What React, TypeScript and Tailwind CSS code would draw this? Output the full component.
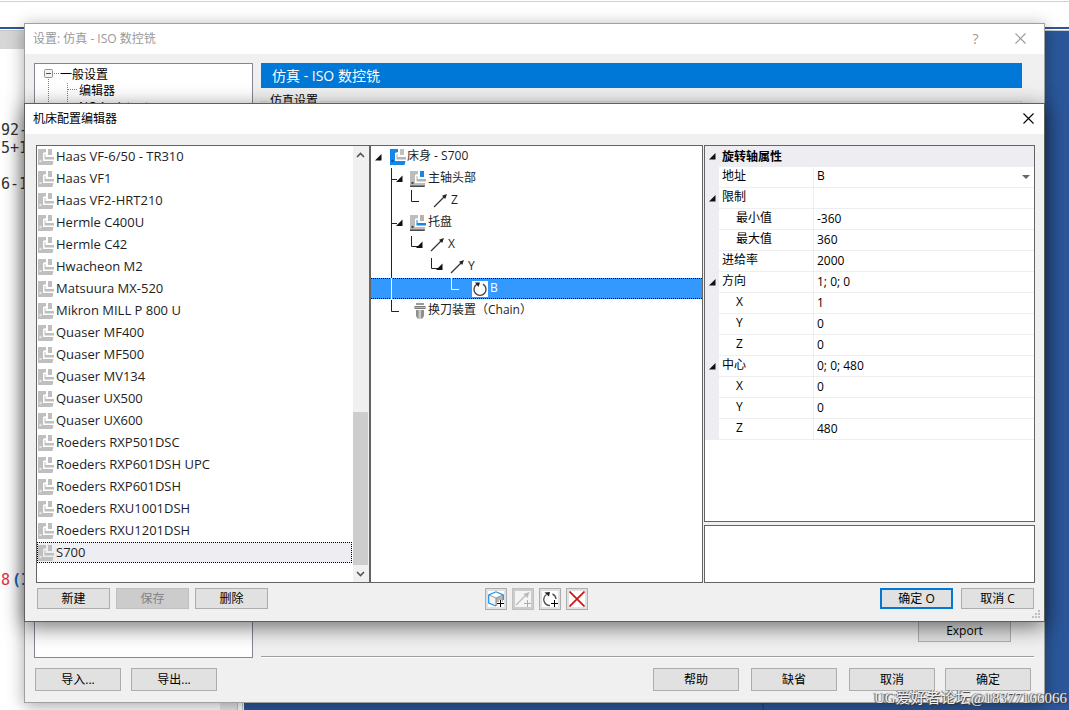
import { useState } from "react";
import type { ReactNode } from "react";
import clsx from "clsx";

const machines = [
  "Haas VF-6/50 - TR310",
  "Haas VF1",
  "Haas VF2-HRT210",
  "Hermle C400U",
  "Hermle C42",
  "Hwacheon M2",
  "Matsuura MX-520",
  "Mikron MILL P 800 U",
  "Quaser MF400",
  "Quaser MF500",
  "Quaser MV134",
  "Quaser UX500",
  "Quaser UX600",
  "Roeders RXP501DSC",
  "Roeders RXP601DSH UPC",
  "Roeders RXP601DSH",
  "Roeders RXU1001DSH",
  "Roeders RXU1201DSH",
  "S700",
];

type Guide = "blank" | "line" | "branch" | "corner" | "cornerOpen";

interface TreeNode {
  label: string;
  guides: Guide[];
  icon: ReactNode;
}

interface Property {
  id: string;
  name: string;
  value: string;
  indent?: boolean;
  group?: boolean;
  options?: boolean;
}

const properties: Property[] = [
  { id: "address", name: "地址", value: "B", options: true },
  { id: "limits", name: "限制", value: "", group: true },
  { id: "min", name: "最小值", value: "-360", indent: true },
  { id: "max", name: "最大值", value: "360", indent: true },
  { id: "feed", name: "进给率", value: "2000" },
  { id: "direction", name: "方向", value: "1; 0; 0", group: true },
  { id: "dir-x", name: "X", value: "1", indent: true },
  { id: "dir-y", name: "Y", value: "0", indent: true },
  { id: "dir-z", name: "Z", value: "0", indent: true },
  { id: "center", name: "中心", value: "0; 0; 480", group: true },
  { id: "center-x", name: "X", value: "0", indent: true },
  { id: "center-y", name: "Y", value: "0", indent: true },
  { id: "center-z", name: "Z", value: "480", indent: true },
];

/* ICONS */

interface MachineIconProps {
  body: string;
  head: string;
  table: string;
  base?: string;
  dot?: string;
}

const MachineIcon = ({ body, head, table, base, dot = "#e4e4e4" }: MachineIconProps) => (
  <svg width="16" height="16" viewBox="0 0 16 16" className="shrink-0">
    <path d="M0 0H8V3L5 4V12H15.500L14.500 16H0Z" fill={body} />
    {base && <path d="M0 14.500H15L14.500 16H0Z" fill={base} />}
    <rect x="10" y="0" width="4" height="6" fill={head} />
    <path d="M6.500 5H7.500V8H16V10.500H6.500Z" fill={table} />
    <circle cx="2.500" cy="12" r="1.300" fill={dot} />
  </svg>
);

const AxisIcon = () => (
  <svg width="16" height="16" viewBox="0 0 16 16" className="shrink-0">
    <path d="M1 14L12 3" stroke="#333" strokeWidth="1.200" />
    <path d="M14 1L9 2.800L12.200 6Z" fill="#222" />
  </svg>
);

const RotaryIcon = () => (
  <svg width="16" height="16" viewBox="0 0 16 16" className="shrink-0 bg-white">
    <path d="M5 3.200A6 6 0 1 0 11 3.200" fill="none" stroke="#444" strokeWidth="1.400" />
    <path d="M3 1.500H8L6.500 6Z" fill="#222" />
  </svg>
);

const ToolChangerIcon = () => (
  <svg width="12" height="16" viewBox="0 0 12 16" className="shrink-0">
    <rect x="2" y="0" width="8" height="2" fill="#999" />
    <path d="M0.500 3H11.500V6H0.500Z" fill="#777" />
    <path d="M0.500 4H11.500V5H0.500Z" fill="#bbb" />
    <path d="M2 7H10V13L8.500 15.500H3.500L2 13Z" fill="#8f8f8f" />
    <path d="M4.500 7H7V15H4.500Z" fill="#c8c8c8" />
  </svg>
);

const Expander = () => (
  <svg width="7" height="7" viewBox="0 0 7 7">
    <path d="M6.500 0V6.500H0Z" fill="#111" />
  </svg>
);

const CloseIcon = ({ color }: { color: string }) => (
  <svg width="11" height="11" viewBox="0 0 11 11">
    <path d="M0.500 0.500L10.500 10.500M10.500 0.500L0.500 10.500" stroke={color} strokeWidth="1.100" />
  </svg>
);

const PlusMark = ({ color }: { color: string }) => (
  <path d="M9 12.500H16M12.500 9V16" stroke={color} strokeWidth="1" />
);

const AddPartIcon = () => (
  <svg width="16" height="16" viewBox="0 0 16 16" className="bg-white">
    <path d="M1 4L8 7V15L1 12Z" fill="#f4f4f4" />
    <path d="M8 7L15 4V12L8 15Z" fill="#b5b5b5" />
    <path d="M1 4L8 7L15 4" fill="none" stroke="#999" strokeWidth="1" />
    <path d="M8 7V15" stroke="#888" strokeWidth="1" />
    <path d="M8 15L0.700 12V4L8 0.800L15.300 4V9" fill="none" stroke="#1b8fe6" strokeWidth="1.200" />
    <path d="M9 12.500H16M12.500 9V16" stroke="#fff" strokeWidth="3" />
    <PlusMark color="#000" />
  </svg>
);

const AddAxisIcon = () => (
  <svg width="16" height="16" viewBox="0 0 16 16" className="bg-[#f4f4f4]">
    <path d="M1 14L12 3" stroke="#bbb" strokeWidth="1.300" />
    <path d="M14.500 1L8.500 3L12.500 7Z" fill="#bbb" />
    <PlusMark color="#aaa" />
  </svg>
);

const AddRotaryIcon = () => (
  <svg width="16" height="16" viewBox="0 0 16 16" className="bg-white">
    <path d="M4.500 3.500A6 6 0 0 0 8 14.500M10.500 3A6 6 0 0 1 14 8" fill="none" stroke="#555" strokeWidth="1.400" />
    <path d="M2.500 1.500L8 1L7 5.500Z" fill="#222" />
    <PlusMark color="#000" />
  </svg>
);

const DeleteIcon = () => (
  <svg width="16" height="16" viewBox="0 0 16 16" className="bg-white">
    <path d="M0.500 0.500L15.500 15.500M15.500 0.500L0.500 15.500" stroke="#cc1414" strokeWidth="1.700" />
  </svg>
);

const guidePaths: Record<Guide, string> = {
  blank: "",
  line: "M1.500 0V22",
  branch: "M1.500 0V22M1.500 11.500H7",
  corner: "M1.500 0V11.500H9",
  cornerOpen: "M1.500 2V12.500H8",
};

const GuideCell = ({ guide, color }: { guide: Guide; color: string }) => (
  <svg width="20" height="22" viewBox="0 0 20 22" className="shrink-0">
    <path d={guidePaths[guide]} fill="none" stroke={color} strokeWidth="1" />
    {(guide === "branch" || guide === "cornerOpen") && <path d="M12.500 7.500V14H6Z" fill="#111" />}
  </svg>
);

const treeNodes: TreeNode[] = [
  {
    label: "主轴头部",
    guides: ["branch"],
    icon: <MachineIcon body="#bdbdbd" head="#1488e8" table="#b4b4b4" base="#4a4a4a" dot="#555" />,
  },
  { label: "Z", guides: ["line", "corner"], icon: <span className="ml-[3px] flex"><AxisIcon /></span> },
  {
    label: "托盘",
    guides: ["branch"],
    icon: <MachineIcon body="#bdbdbd" head="#b4b4b4" table="#1488e8" base="#4a4a4a" dot="#555" />,
  },
  { label: "X", guides: ["line", "cornerOpen"], icon: <AxisIcon /> },
  { label: "Y", guides: ["line", "blank", "cornerOpen"], icon: <AxisIcon /> },
  {
    label: "B",
    guides: ["line", "blank", "blank", "corner"],
    icon: <span className="ml-[2px] flex"><RotaryIcon /></span>,
  },
  { label: "换刀装置（Chain）", guides: ["corner"], icon: <span className="ml-[4px] flex"><ToolChangerIcon /></span> },
];

/* BUTTONS */

interface PushButtonProps {
  children: ReactNode;
  className?: string;
  disabled?: boolean;
  primary?: boolean;
}

const PushButton = ({ children, className, disabled, primary }: PushButtonProps) => (
  <button
    type="button"
    disabled={disabled}
    className={clsx(
      "flex items-center justify-center text-xs",
      primary ? "border-2 border-[#0078d7] bg-[#e1e1e1]" : "border",
      !primary && (disabled ? "border-[#bfbfbf] bg-[#cccccc] text-[#838383]" : "border-[#adadad] bg-[#e1e1e1]"),
      className
    )}
  >
    {children}
  </button>
);

const ToolButton = ({ label, children, disabled }: { label: string; children: ReactNode; disabled?: boolean }) => (
  <button
    type="button"
    aria-label={label}
    disabled={disabled}
    className={clsx(
      "flex size-[22px] items-center justify-center border",
      disabled ? "border-[#bfbfbf] bg-[#cccccc]" : "border-[#adadad] bg-[#e1e1e1]"
    )}
  >
    {children}
  </button>
);

/* EDITOR BEHIND THE DIALOGS */

const codeLines = ["92-", "5+1", "", "6-1"];

const EditorBackground = () => (
  <div className="flex min-h-screen flex-col bg-white">
    <div className="h-[27px] border-t border-white">
      <div className="h-px bg-[#d2d2d2]" />
    </div>
    <div className="h-[2px] bg-[#2b579a]" />
    <div className="h-[2px] border-b border-[#c8c8c8]" />
    <div className="flex flex-1">
      <div className="flex w-[243px] shrink-0 border-r border-[#c8c8c8]">
        <div className="flex-1">
          <div className="h-[18px] bg-[#d6d6d6]" />
          <div className="pt-[72px] pl-px font-['DejaVu_Sans_Mono',monospace] text-[15px] leading-[18px] text-[#333]">
            {codeLines.map((line, i) => (
              <div key={i} className="h-[18px]">{line}</div>
            ))}
            <div className="flex gap-[2px] pt-[378px]">
              <span className="text-[#dd3344]">8</span>
              <span className="font-bold text-[#1464c0]">(I</span>
            </div>
          </div>
        </div>
        <div className="mr-[4px] w-[18px] border-r border-[#c8c8c8] bg-[#e8e8e8]" />
      </div>
      <div className="ml-px flex flex-1 bg-[#2b579a]">
        <div className="flex-[518] border-r-2 border-[#24487f]" />
        <div className="flex-[305]" />
      </div>
    </div>
  </div>
);

/* SETTINGS DIALOG */

const SettingsDialog = () => (
  <section
    aria-label="设置"
    className="absolute top-[23px] right-[24px] bottom-[7px] left-[24px] flex flex-col border border-[#a0a0a0] bg-[#f0f0f0] shadow-[0_3px_16px_rgba(0,0,0,0.35)]"
  >
    <header className="flex h-[30px] shrink-0 items-center bg-white pr-px pb-px pl-2 text-xs text-[#999]">
      <h1 className="flex-1">设置: 仿真 - ISO 数控铣</h1>
      <button type="button" aria-label="帮助" className="w-[45px] text-sm">?</button>
      <button type="button" aria-label="关闭" className="flex w-[45px] justify-center">
        <CloseIcon color="#999" />
      </button>
    </header>

    <div className="flex min-h-0 flex-1 gap-2 pt-[9px] pr-[10px] pl-[9px]">
      <div className="w-[219px] shrink-0 overflow-hidden border border-[#828790] bg-white pt-[3px] text-xs leading-4">
        <div className="flex h-4 items-center pl-[9px]">
          <svg width="16" height="16" viewBox="0 0 16 16">
            <rect x="0.500" y="2.500" width="8" height="8" rx="1" fill="#f4f4f4" stroke="#919191" />
            <path d="M2 6.500H7" stroke="#2b4fa0" />
            <path d="M10 6.500H16M4.500 12V16" stroke="#808080" strokeDasharray="1 1" />
          </svg>
          <span>一般设置</span>
        </div>
        {["编辑器", "NC Assistant"].map((item) => (
          <div key={item} className="flex h-4 items-center pl-[9px]">
            <svg width="35" height="16" viewBox="0 0 35 16">
              <path d="M4.500 0V16M23.500 0V16M24 6.500H33" stroke="#808080" strokeDasharray="1 1" />
            </svg>
            <span>{item}</span>
          </div>
        ))}
      </div>

      <div className="flex min-w-0 flex-1 flex-col">
        <h2 className="mr-3 flex h-[25px] shrink-0 items-center bg-[#0078d7] pl-[11px] text-sm text-white">
          仿真 - ISO 数控铣
        </h2>
        <fieldset className="mt-[5px] mr-3 mb-2 min-h-0 flex-1 border border-[#dcdcdc] pl-[6px]">
          <legend className="px-[2px] text-xs leading-4">仿真设置</legend>
        </fieldset>
        <PushButton className="mr-[23px] mb-[14px] h-[23px] w-[93px] shrink-0 self-end">Export</PushButton>
        <div className="h-[2px] shrink-0 border-t border-[#a0a0a0] bg-white" />
      </div>
    </div>

    <footer className="flex shrink-0 gap-[10px] pt-[10px] pr-[13px] pb-[11px] pl-[10px]">
      <PushButton className="h-[23px] w-[86px]">导入...</PushButton>
      <PushButton className="h-[23px] w-[86px]">导出...</PushButton>
      <div className="ml-auto flex gap-3">
        <PushButton className="h-[23px] w-[86px]">帮助</PushButton>
        <PushButton className="h-[23px] w-[86px]">缺省</PushButton>
        <PushButton className="h-[23px] w-[86px]">取消</PushButton>
      </div>
      <PushButton className="h-[23px] w-[86px]">确定</PushButton>
    </footer>
  </section>
);

/* MACHINE CONFIGURATION DIALOG */

const MachineList = () => {
  const [selected, setSelected] = useState("S700");

  return (
    <div className="flex min-w-0 border border-[#646464] bg-white text-[13px] leading-4">
      <ul className="min-w-0 flex-1 overflow-hidden">
        {machines.map((machine) => (
          <li key={machine} className="h-[22px]">
            <button
              type="button"
              onClick={() => setSelected(machine)}
              className={clsx(
                "flex h-[21px] w-full items-center gap-[2px] border border-dotted text-left",
                machine === selected ? "border-black bg-[#eeeef2]" : "border-transparent"
              )}
            >
              <MachineIcon body="#bfbfbf" head="#bfbfbf" table="#bfbfbf" />
              <span className="pb-[2px]">{machine}</span>
            </button>
          </li>
        ))}
      </ul>
      <div className="ml-px flex w-[16px] shrink-0 flex-col items-center border-r border-[#f0f0f0] bg-[#f0f0f0]">
        <svg width="15" height="17" viewBox="0 0 15 17" className="shrink-0">
          <path d="M4 11L7.500 7.500L11 11" fill="none" stroke="#555" strokeWidth="1.600" />
        </svg>
        <div className="flex-[249]" />
        <div className="w-full flex-[153] bg-[#cdcdcd]" />
        <svg width="15" height="17" viewBox="0 0 15 17" className="shrink-0">
          <path d="M4 7L7.500 10.500L11 7" fill="none" stroke="#555" strokeWidth="1.600" />
        </svg>
      </div>
    </div>
  );
};

const AxisTree = () => {
  const [selected, setSelected] = useState("B");

  return (
    <div className="min-w-0 border border-[#646464] bg-white">
      <div className="flex h-[22px] items-center">
        <span className="flex w-[19px] shrink-0 pl-1"><Expander /></span>
        <MachineIcon body="#1488e8" head="#c0c0c0" table="#b4b4b4" dot="#0b5ba3" />
        <span className="pb-[2px] pl-px">床身 - S700</span>
      </div>
      {treeNodes.map((node) => {
        const active = node.label === selected;
        return (
          <div key={node.label} className="h-[22px]">
            <button
              type="button"
              onClick={() => setSelected(node.label)}
              className={clsx(
                "flex h-[21px] w-full items-center border-y border-dotted pl-[19px] text-left",
                active ? "border-black bg-[#3399ff] text-white" : "border-transparent"
              )}
            >
              {node.guides.map((guide, i) => (
                <GuideCell key={i} guide={guide} color={active ? "#fff" : "#222"} />
              ))}
              {node.icon}
              <span className="pb-[2px] pl-[2px]">{node.label}</span>
            </button>
          </div>
        );
      })}
    </div>
  );
};

const PropertyGrid = () => (
  <div className="flex min-h-0 flex-1 flex-col border border-[#646464] bg-white">
    <table className="w-full table-fixed border-separate border-spacing-0">
      <colgroup>
        <col className="w-[14px]" />
        <col className="w-[95px]" />
        <col />
      </colgroup>
      <thead>
        <tr className="h-[21px] bg-[#eeeef2] text-left">
          <th className="p-0 pl-1"><Expander /></th>
          <th colSpan={2} className="p-0 pl-[3px] font-bold">旋转轴属性</th>
        </tr>
      </thead>
      <tbody>
        {properties.map((prop) => (
          <tr key={prop.id} className="h-[21px]">
            <td className="bg-[#eeeef2] p-0 pl-1">{prop.group && <Expander />}</td>
            <td className={clsx("border-r border-b border-[#eeeef2] p-0", prop.indent ? "pl-[17px]" : "pl-[3px]")}>
              <label htmlFor={prop.id} className="block h-5 leading-[18px]">{prop.name}</label>
            </td>
            <td className="border-b border-[#eeeef2] p-0 pl-[3px]">
              {prop.options ? (
                <div className="flex h-5 items-center pr-1">
                  <select id={prop.id} defaultValue={prop.value} className="h-5 flex-1 appearance-none bg-transparent pb-[2px] outline-none">
                    <option>A</option>
                    <option>B</option>
                    <option>C</option>
                  </select>
                  <svg width="8" height="4" viewBox="0 0 8 4">
                    <path d="M0 0H8L4 4Z" fill="#666" />
                  </svg>
                </div>
              ) : (
                <input id={prop.id} defaultValue={prop.value} className="block h-5 w-full bg-transparent pb-[2px] outline-none" />
              )}
            </td>
          </tr>
        ))}
      </tbody>
    </table>
  </div>
);

const MachineConfigDialog = () => (
  <section
    aria-label="机床配置编辑器"
    className="absolute top-[103px] right-[24px] bottom-[88px] left-[24px] flex flex-col border border-[#5f5f5f] bg-[#f0f0f0] shadow-[0_5px_20px_rgba(0,0,0,0.55)]"
  >
    <header className="flex h-[30px] shrink-0 items-center bg-white pr-px pb-px pl-2 text-xs">
      <h2 className="flex-1">机床配置编辑器</h2>
      <button type="button" aria-label="关闭" className="flex w-[30px] justify-center">
        <CloseIcon color="#000" />
      </button>
    </header>

    <div className="grid min-h-0 flex-1 grid-cols-[334fr_333fr_332fr] pt-[11px] pr-[9px] pl-[11px] text-xs text-[#1e1e1e]">
      <MachineList />
      <AxisTree />
      <div className="flex min-h-0 min-w-0 flex-col gap-[3px] pl-px text-black">
        <PropertyGrid />
        <div className="h-[58px] shrink-0 border border-[#646464] bg-white" />
      </div>
    </div>

    <footer className="grid h-[38px] shrink-0 grid-cols-[334fr_333fr_332fr] items-start pt-[5px] pr-[9px] pl-[11px]">
      <div className="flex gap-[6px] pl-px">
        <PushButton className="h-[21px] w-[73px]">新建</PushButton>
        <PushButton className="h-[21px] w-[73px]" disabled>保存</PushButton>
        <PushButton className="h-[21px] w-[73px]">删除</PushButton>
      </div>
      <div className="flex justify-center gap-[5px]">
        <ToolButton label="添加部件"><AddPartIcon /></ToolButton>
        <ToolButton label="添加直线轴" disabled><AddAxisIcon /></ToolButton>
        <ToolButton label="添加旋转轴"><AddRotaryIcon /></ToolButton>
        <ToolButton label="删除轴"><DeleteIcon /></ToolButton>
      </div>
      <div className="flex justify-end gap-2 pr-px">
        <PushButton className="h-[21px] w-[73px]" primary>确定 O</PushButton>
        <PushButton className="h-[21px] w-[73px]">取消 C</PushButton>
      </div>
    </footer>

    <svg width="8" height="8" viewBox="0 0 8 8" className="absolute right-1 bottom-[3px]">
      <path d="M6 0h2v2h-2zM3 3h2v2h-2zM6 3h2v2h-2zM0 6h2v2h-2zM3 6h2v2h-2zM6 6h2v2h-2z" fill="#bfbfbf" />
    </svg>
  </section>
);

const App = () => {
  return (
    <main className="relative min-h-screen overflow-hidden font-['Open_Sans','Noto_Sans_CJK_SC',sans-serif] text-black">
      <EditorBackground />
      <SettingsDialog />
      <MachineConfigDialog />
      <p className="absolute right-[2px] bottom-[2px] font-['Liberation_Serif','Noto_Sans_CJK_SC',serif] text-[15px] leading-5 whitespace-nowrap text-[#eee] [text-shadow:1px_1px_1px_#333,-1px_0_1px_#555]">
        UG爱好者论坛@18377166066
      </p>
    </main>
  );
};

export default App;
